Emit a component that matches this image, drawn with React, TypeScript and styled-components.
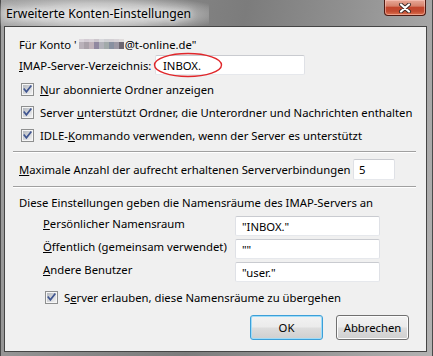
import React from "react";
import styled, { createGlobalStyle } from "styled-components";

const GlobalStyle = createGlobalStyle`
  html, body { margin: 0; padding: 0; }
  body {
    width: 433px; height: 356px; overflow: hidden;
    font-family: "Noto Sans", "Open Sans", sans-serif;
    font-size: 11.3px; color: #000;
  }
  * { box-sizing: border-box; }
`;

const Window = styled.div`
  width: 433px;
  height: 356px;
  display: flex;
  flex-direction: column;
  padding: 0 5px 4px 3px;
  border-left: 1px solid #4a4a4a;
  border-right: 1px solid #4a4a4a;
  background: linear-gradient(100deg, #a2a2a2 0%, #8a8a8a 25%, #7c7c7c 50%, #909090 70%, #a6a6a6 88%, #b2b2b2 100%);
`;

const TitleBar = styled.div`
  height: 26px;
  flex: none;
  display: flex;
  align-items: flex-start;
  justify-content: space-between;
`;

const Title = styled.span`
  margin: 0 0 0 -4px;
  padding: 5px 18px 0 6px;
  height: 26px;
  font-size: 12.2px;
  color: #000;
  background: radial-gradient(ellipse 62% 75% at 48% 55%, rgba(232,232,232,0.95) 0%, rgba(220,220,220,0.7) 55%, rgba(200,200,200,0) 100%);
  text-shadow: 0 0 6px #fff, 0 0 10px rgba(255,255,255,0.8);
`;

const CloseButton = styled.div`
  width: 42px;
  height: 16px;
  margin-right: 1px;
  border: 1px solid #4e1a12;
  border-top: none;
  border-radius: 0 0 4px 4px;
  background: linear-gradient(180deg, #e8a898 0%, #d6826c 40%, #c2452c 50%, #c24a30 75%, #dc7250 100%);
  box-shadow: inset 0 0 0 1px rgba(255,210,200,0.5);
  display: flex;
  align-items: center;
  justify-content: center;
`;

const Client = styled.div`
  flex: 1;
  border: 1px solid #454545;
  background: #f0f0f0;
  display: flex;
  flex-direction: column;
  padding-top: 8px;
`;

const TextRow = styled.div<{ $indent: number; $mt?: number }>`
  height: 18px;
  margin-top: ${(p) => p.$mt ?? 0}px;
  display: flex;
  align-items: center;
  padding-left: ${(p) => p.$indent}px;
  white-space: nowrap;
`;

const FieldRow = styled.div<{ $label: number; $mt: number; $h: number }>`
  margin-top: ${(p) => p.$mt}px;
  height: ${(p) => p.$h}px;
  display: grid;
  grid-template-columns: ${(p) => p.$label}px auto;
  align-items: center;
  padding-left: 14px;
  white-space: nowrap;
`;

const InputWrap = styled.div`
  position: relative;
  display: flex;
`;

const TextBox = styled.div<{ $w: number; $h: number; $pl: number }>`
  width: ${(p) => p.$w}px;
  height: ${(p) => p.$h}px;
  padding-left: ${(p) => p.$pl}px;
  background: #fff;
  border: 1px solid;
  border-color: #c9cbd0 #dfe1e6 #e6e8ec #dfe1e6;
  border-radius: 2px;
  display: flex;
  align-items: center;
  white-space: nowrap;
`;

const Ellipse = styled.svg`
  position: absolute;
  left: -2px;
  top: -3px;
  pointer-events: none;
  overflow: visible;
`;

const CheckList = styled.div`
  margin-top: 3px;
  display: flex;
  flex-direction: column;
  gap: 1px;
`;

const CheckRow = styled.div<{ $indent: number; $mt?: number }>`
  height: 22px;
  margin-top: ${(p) => p.$mt ?? 0}px;
  display: flex;
  align-items: center;
  gap: 6px;
  padding-left: ${(p) => p.$indent}px;
  white-space: nowrap;
`;

const Separator = styled.div<{ $mt: number }>`
  margin: ${(p) => p.$mt}px 10px 0 8px;
  height: 2px;
  border-top: 1px solid #a0a0a0;
  border-bottom: 1px solid #ffffff;
`;

const NamespaceGrid = styled.div`
  margin-top: 5px;
  padding-left: 38px;
  display: grid;
  grid-template-columns: 192px 145px;
  grid-auto-rows: 20px;
  row-gap: 3px;
  align-items: center;
`;

const NsLabel = styled.span`
  padding-bottom: 6px;
  white-space: nowrap;
`;

const ButtonRow = styled.div`
  margin-top: 7px;
  display: flex;
  justify-content: flex-end;
  gap: 13px;
  padding-right: 17px;
`;

const Button = styled.div<{ $default?: boolean }>`
  width: 73px;
  height: 25px;
  border-radius: 3px;
  display: flex;
  align-items: center;
  justify-content: center;
  border: 1px solid ${(p) => (p.$default ? "#3c9fd8" : "#707070")};
  background: linear-gradient(180deg, #f2f2f2 0%, #ebebeb 48%, #dddddd 52%, #cfcfcf 100%);
  box-shadow: ${(p) => (p.$default ? "inset 0 0 0 1px #9fdcf8" : "inset 0 0 0 1px #fcfcfc")};
`;

const Key = styled.span`
  text-decoration: underline;
  text-underline-offset: 1px;
`;

const Mosaic = styled.svg`
  margin: 0 1px 0 2px;
`;

const CheckIcon = () => (
  <svg width="13" height="13" viewBox="0 0 13 13">
    <defs>
      <linearGradient id="cbg" x1="0" y1="0" x2="1" y2="1">
        <stop offset="0" stopColor="#b4b8be" />
        <stop offset="1" stopColor="#f2f2f3" />
      </linearGradient>
    </defs>
    <rect x="0.5" y="0.5" width="12" height="12" fill="#f6f6f6" stroke="#8e8f8f" />
    <rect x="2" y="2" width="9" height="9" fill="url(#cbg)" />
    <path d="M3.3 6.2 L5.4 8.8 L9.8 3.2" fill="none" stroke="#3f5590" strokeWidth="1.7" strokeLinecap="square" />
  </svg>
);

const topRow = ["#dcd6dc", "#d4ccd4", "#d8d2d8", "#ccc6cc", "#d8d8dc", "#d0d0d4", "#d4d0d4", "#d8d4d8", "#e0dcdc"];
const botRow = ["#bab2ba", "#aaa2aa", "#c0b2ba", "#9088a0", "#b2b2ba", "#a2aaaa", "#8890a0", "#9c98a4", "#6c6670"];

const BlurredName = () => (
  <Mosaic width="45" height="10" viewBox="0 0 45 10">
    {topRow.map((c, i) => (
      <rect key={"t" + i} x={i * 5} y={0} width={5} height={3} fill={c} />
    ))}
    {botRow.map((c, i) => (
      <rect key={"b" + i} x={i * 5} y={3} width={5} height={7} fill={c} />
    ))}
  </Mosaic>
);

export default function App() {
  return (
    <>
      <GlobalStyle />
      <Window>
        <TitleBar>
          <Title>Erweiterte Konten-Einstellungen</Title>
          <CloseButton>
            <svg width="14" height="10" viewBox="0 0 14 10">
              <path d="M3 1.5 L11 8.5 M11 1.5 L3 8.5" stroke="#3a2a28" strokeWidth="4" strokeLinecap="round" />
              <path d="M3 1.5 L11 8.5 M11 1.5 L3 8.5" stroke="#ffffff" strokeWidth="2.2" strokeLinecap="round" />
            </svg>
          </CloseButton>
        </TitleBar>
        <Client>
          <TextRow $indent={14}>
            Für Konto '<BlurredName />@t-online.de"
          </TextRow>
          <FieldRow $label={136} $mt={2} $h={20}>
            <span>
              <Key>I</Key>MAP-Server-Verzeichnis:
            </span>
            <InputWrap>
              <TextBox $w={150} $h={20} $pl={7}>INBOX.</TextBox>
              <Ellipse width="70" height="26" viewBox="0 0 70 26">
                <ellipse cx="35" cy="13" rx="33.5" ry="11.5" fill="none" stroke="#e0262a" strokeWidth="1.4" />
              </Ellipse>
            </InputWrap>
          </FieldRow>
          <CheckList>
            <CheckRow $indent={16}>
              <CheckIcon />
              <span>
                <Key>N</Key>ur abonnierte Ordner anzeigen
              </span>
            </CheckRow>
            <CheckRow $indent={16}>
              <CheckIcon />
              <span>
                Server <Key>u</Key>nterstützt Ordner, die Unterordner und Nachrichten enthalten
              </span>
            </CheckRow>
            <CheckRow $indent={16}>
              <CheckIcon />
              <span>
                IDLE-<Key>K</Key>ommando verwenden, wenn der Server es unterstützt
              </span>
            </CheckRow>
          </CheckList>
          <Separator $mt={5} />
          <FieldRow $label={334} $mt={6} $h={21}>
            <span>
              <Key>M</Key>aximale Anzahl der aufrecht erhaltenen Serververbindungen
            </span>
            <TextBox $w={42} $h={21} $pl={5}>5</TextBox>
          </FieldRow>
          <Separator $mt={6} />
          <TextRow $indent={14} $mt={5}>
            Diese Einstellungen geben die Namensräume des IMAP-Servers an
          </TextRow>
          <NamespaceGrid>
            <NsLabel>
              <Key>P</Key>ersönlicher Namensraum
            </NsLabel>
            <TextBox $w={145} $h={20} $pl={6}>"INBOX."</TextBox>
            <NsLabel>
              <Key>Ö</Key>ffentlich (gemeinsam verwendet)
            </NsLabel>
            <TextBox $w={145} $h={20} $pl={6}>""</TextBox>
            <NsLabel>
              <Key>A</Key>ndere Benutzer
            </NsLabel>
            <TextBox $w={145} $h={20} $pl={6}>"user."</TextBox>
          </NamespaceGrid>
          <CheckRow $indent={40} $mt={4}>
            <CheckIcon />
            <span>
              S<Key>e</Key>rver erlauben, diese Namensräume zu übergehen
            </span>
          </CheckRow>
          <ButtonRow>
            <Button $default>OK</Button>
            <Button>Abbrechen</Button>
          </ButtonRow>
        </Client>
      </Window>
    </>
  );
}
